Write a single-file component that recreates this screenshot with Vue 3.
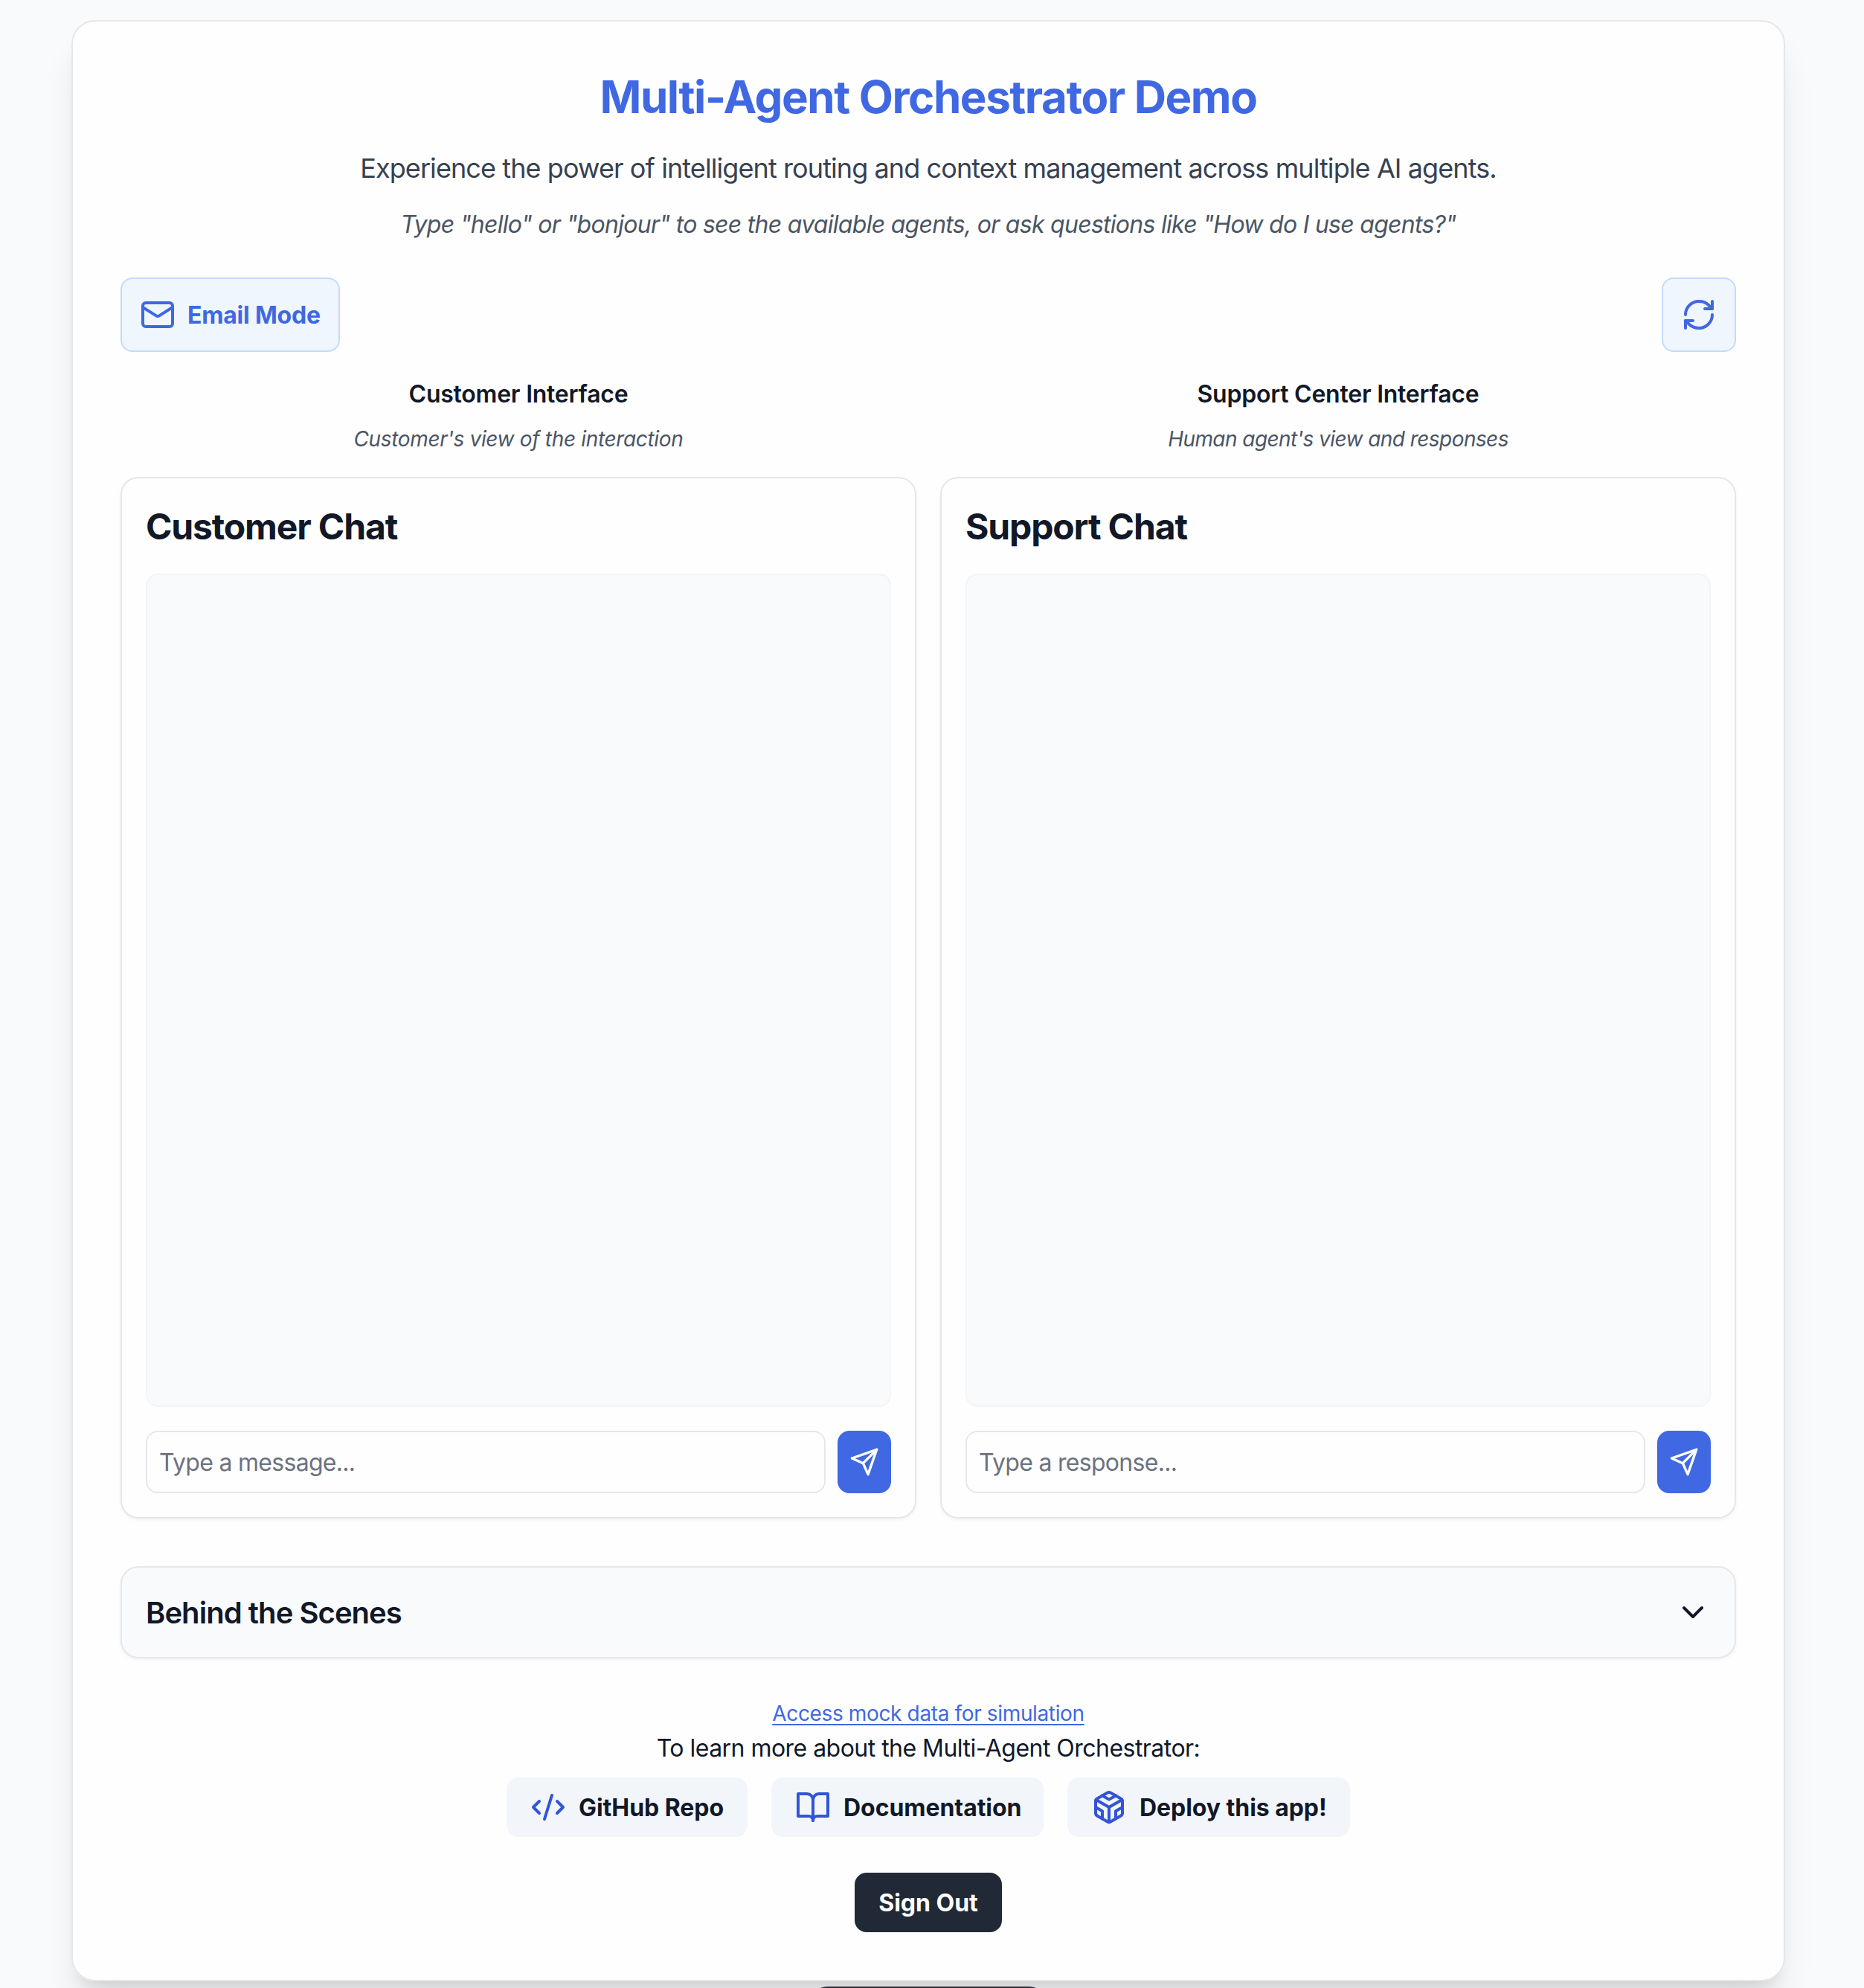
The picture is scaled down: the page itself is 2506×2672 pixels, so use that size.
<script setup>
const panels = [
  { title: 'Customer Interface', note: "Customer's view of the interaction", chat: 'Customer Chat', placeholder: 'Type a message...' },
  { title: 'Support Center Interface', note: "Human agent's view and responses", chat: 'Support Chat', placeholder: 'Type a response...' },
]

const links = [
  { label: 'GitHub Repo', cls: 'w-github', paths: ['m18 16 4-4-4-4', 'm6 8-4 4 4 4', 'm14.5 4-5 16'] },
  {
    label: 'Documentation',
    cls: 'w-docs',
    paths: ['M2 3h6a4 4 0 0 1 4 4v14a3 3 0 0 0-3-3H2z', 'M22 3h-6a4 4 0 0 0-4 4v14a3 3 0 0 1 3-3h7z'],
  },
  {
    label: 'Deploy this app!',
    cls: 'w-deploy',
    paths: [
      'M21 16V8a2 2 0 0 0-1-1.73l-7-4a2 2 0 0 0-2 0l-7 4A2 2 0 0 0 3 8v8a2 2 0 0 0 1 1.73l7 4a2 2 0 0 0 2 0l7-4A2 2 0 0 0 21 16z',
      'M7.5 4.21 12 6.81l4.5-2.6',
      'M7.5 19.79V14.6L3 12',
      'M21 12l-4.5 2.6v5.19',
      'M3.27 6.96 12 12.01l8.73-5.05',
      'M12 22.08V12',
    ],
  },
]
</script>

<template>
  <div class="page">
    <main class="card">
      <header class="intro">
        <h1>Multi-Agent Orchestrator Demo</h1>
        <p class="lead">Experience the power of intelligent routing and context management across multiple AI agents.</p>
        <p class="hint">Type "hello" or "bonjour" to see the available agents, or ask questions like "How do I use agents?"</p>
      </header>

      <div class="toolbar">
        <button class="tool mode">
          <svg class="icon" viewBox="0 0 24 24">
            <rect width="20" height="16" x="2" y="4" rx="2" />
            <path d="m22 7-8.97 5.7a1.94 1.94 0 0 1-2.06 0L2 7" />
          </svg>
          <span class="label">Email Mode</span>
        </button>
        <button class="tool" aria-label="Refresh">
          <svg class="icon" viewBox="0 0 24 24">
            <path d="M3 12a9 9 0 0 1 9-9 9.75 9.75 0 0 1 6.74 2.74L21 8" />
            <path d="M21 3v5h-5" />
            <path d="M21 12a9 9 0 0 1-9 9 9.75 9.75 0 0 1-6.74-2.74L3 16" />
            <path d="M8 16H3v5" />
          </svg>
        </button>
      </div>

      <div class="columns">
        <section v-for="p in panels" :key="p.chat" class="column">
          <h3>{{ p.title }}</h3>
          <p class="note">{{ p.note }}</p>
          <div class="panel">
            <h2>{{ p.chat }}</h2>
            <div class="messages"></div>
            <form class="compose" @submit.prevent>
              <input type="text" :placeholder="p.placeholder" />
              <button class="send" aria-label="Send">
                <svg class="icon small" viewBox="0 0 24 24">
                  <path d="m22 2-7 20-4-9-9-4Z" />
                  <path d="M22 2 11 13" />
                </svg>
              </button>
            </form>
          </div>
        </section>
      </div>

      <section class="scenes">
        <h2>Behind the Scenes</h2>
        <svg class="icon" viewBox="0 0 24 24"><path d="m6 9 6 6 6-6" /></svg>
      </section>

      <footer>
        <div class="line"><a class="mock" href="#">Access mock data for simulation</a></div>
        <p class="line learn">To learn more about the Multi-Agent Orchestrator:</p>
        <div class="links">
          <a v-for="l in links" :key="l.label" href="#" class="link" :class="l.cls">
            <svg class="icon" viewBox="0 0 24 24"><path v-for="d in l.paths" :key="d" :d="d" /></svg>
            <span class="label">{{ l.label }}</span>
          </a>
        </div>
        <button class="signout">Sign Out</button>
      </footer>
    </main>
    <div class="dock"></div>
  </div>
</template>

<style>
html,
body {
  margin: 0;
  height: 100%;
  overflow: hidden;
  background: #f9fafc;
}
</style>

<style scoped>
* {
  box-sizing: border-box;
}
.page {
  position: relative;
  width: 2506px;
  height: 2672px;
  padding: 27px 106px 0 96px;
  overflow: hidden;
  background: #f9fafc;
  color: #111827;
  font-family: Inter, "Liberation Sans", sans-serif;
  font-size: 32px;
  line-height: 48px;
}
h1,
h2,
h3,
p {
  margin: 0;
}
button,
input {
  font: inherit;
  margin: 0;
}
a {
  color: inherit;
  text-decoration: none;
}
.icon {
  width: 48px;
  height: 48px;
  flex: none;
  display: block;
  fill: none;
  stroke: currentColor;
  stroke-width: 2;
  stroke-linecap: round;
  stroke-linejoin: round;
}
.icon.small {
  width: 40px;
  height: 40px;
}
.label {
  padding-top: 2px;
  letter-spacing: -0.2px;
  white-space: nowrap;
}
.card {
  width: 2304px;
  height: 2636px;
  padding: 64px;
  border: 2px solid #e5e7eb;
  border-radius: 32px;
  background: #fefefe;
  box-shadow: 0 40px 50px -10px rgba(0, 0, 0, 0.1), 0 16px 20px -12px rgba(0, 0, 0, 0.1);
}
.intro {
  display: flex;
  flex-direction: column;
  align-items: center;
  white-space: nowrap;
}
h1 {
  height: 72px;
  font-size: 60px;
  line-height: 74px;
  font-weight: 700;
  letter-spacing: -1.42px;
  color: #4068e2;
}
.lead {
  height: 56px;
  margin-top: 32px;
  font-size: 36px;
  line-height: 58px;
  letter-spacing: -0.91px;
  color: #374151;
}
.hint {
  height: 48px;
  margin-top: 24px;
  line-height: 50px;
  font-style: italic;
  letter-spacing: -0.72px;
  color: #4b5563;
}
.toolbar {
  display: flex;
  justify-content: space-between;
  margin-top: 48px;
}
.tool {
  display: flex;
  align-items: center;
  gap: 16px;
  width: 100px;
  height: 100px;
  padding: 24px;
  border: 2px solid #c3dafb;
  border-radius: 16px;
  background: #eff6fe;
  color: #4068e2;
  font-weight: 700;
}
.tool.mode {
  width: 295px;
}
.columns {
  display: grid;
  grid-template-columns: 1fr 1fr;
  gap: 32px;
  margin-top: 32px;
}
.column {
  text-align: center;
}
h3 {
  height: 48px;
  font-size: 32px;
  font-weight: 600;
  line-height: 50px;
  letter-spacing: -0.24px;
}
.note {
  height: 40px;
  margin-top: 16px;
  font-size: 28px;
  line-height: 42px;
  font-style: italic;
  letter-spacing: -0.34px;
  color: #4b5563;
}
.column:last-child .note {
  letter-spacing: -0.56px;
}
.panel {
  display: flex;
  flex-direction: column;
  height: 1400px;
  margin-top: 32px;
  padding: 32px;
  border: 2px solid #e5e7eb;
  border-radius: 24px;
  text-align: left;
  background: #fefefe;
  box-shadow: 0 2px 4px rgba(0, 0, 0, 0.05);
}
.panel h2 {
  height: 64px;
  font-size: 48px;
  line-height: 66px;
  font-weight: 700;
  letter-spacing: -1.14px;
}
.messages {
  flex: 1;
  margin: 32px 0;
  border: 2px solid #f3f4f6;
  border-radius: 16px;
  background: #f9fafc;
}
.compose {
  display: flex;
  gap: 16px;
  height: 84px;
}
input {
  flex: 1;
  min-width: 0;
  padding: 2px 16px 0;
  border: 2px solid #e5e7eb;
  border-radius: 16px;
  background: #fefefe;
  color: #111827;
  letter-spacing: -0.7px;
}
input::placeholder {
  color: #6b7280;
  opacity: 1;
}
.send {
  display: flex;
  align-items: center;
  justify-content: center;
  width: 72px;
  padding: 0;
  border: 0;
  border-radius: 16px;
  background: #4068e2;
  color: #fff;
}
.scenes {
  display: flex;
  align-items: center;
  justify-content: space-between;
  height: 124px;
  margin-top: 64px;
  padding: 0 32px;
  border: 2px solid #e5e7eb;
  border-radius: 24px;
  background: #f9fafc;
  box-shadow: 0 2px 4px rgba(0, 0, 0, 0.05);
}
.scenes h2 {
  height: 56px;
  font-size: 40px;
  line-height: 58px;
  font-weight: 600;
  letter-spacing: -0.95px;
}
footer {
  display: flex;
  flex-direction: column;
  align-items: center;
  margin-top: 48px;
  white-space: nowrap;
}
.line {
  height: 48px;
  line-height: 50px;
}
.learn {
  letter-spacing: -0.53px;
}
.mock {
  font-size: 28px;
  letter-spacing: -0.36px;
  color: #4068e2;
  text-decoration: underline;
  text-decoration-thickness: 2px;
  text-underline-offset: 4px;
}
.links {
  display: flex;
  gap: 32px;
  margin-top: 16px;
}
.link {
  display: flex;
  align-items: center;
  gap: 16px;
  height: 80px;
  padding: 0 32px;
  border-radius: 16px;
  background: #f2f5fa;
  font-weight: 700;
}
.link .icon {
  color: #3354d6;
}
.link .label {
  padding-left: 1px;
  letter-spacing: -0.05px;
}
.w-github {
  width: 324px;
}
.w-docs {
  width: 366px;
}
.w-deploy {
  width: 380px;
}
.signout {
  width: 198px;
  height: 80px;
  margin-top: 48px;
  padding: 2px 0 0;
  border: 0;
  border-radius: 16px;
  background: #212936;
  color: #fefefe;
  font-weight: 700;
  letter-spacing: 0;
}
/* Floating bar peeking in from the bottom edge */
.dock {
  position: absolute;
  left: 1092px;
  top: 2670px;
  width: 312px;
  height: 40px;
  border-radius: 24px;
  background: #33303e;
}
</style>
